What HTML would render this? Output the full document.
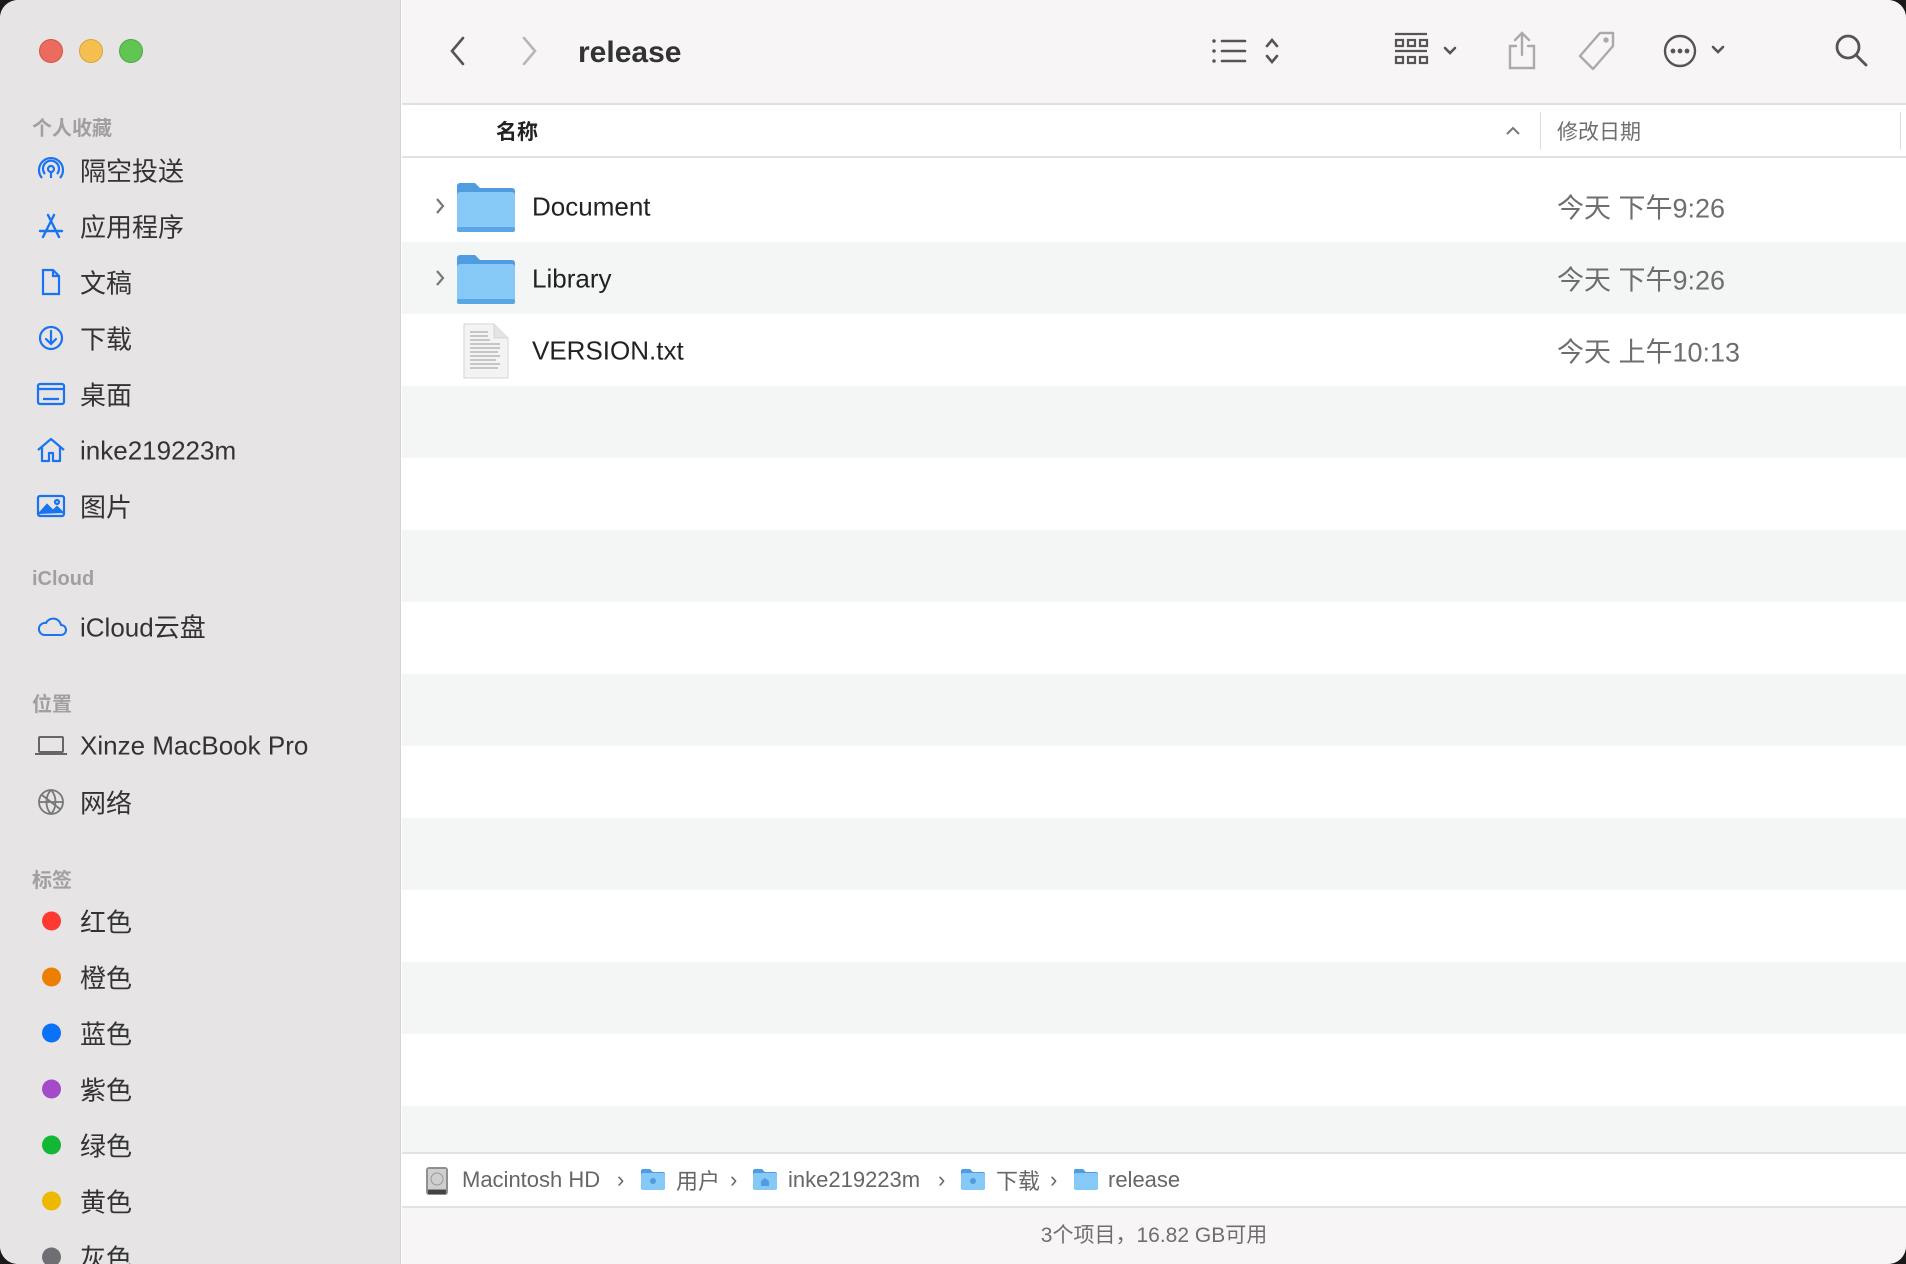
<!DOCTYPE html>
<html><head><meta charset="utf-8"><style>
*{margin:0;padding:0;box-sizing:border-box}
body{width:1906px;height:1264px;background:#1a1a1a;overflow:hidden;font-family:"Liberation Sans","Noto Sans CJK SC",sans-serif;position:relative}
.win{position:absolute;left:0;top:0;width:1906px;height:1264px;border-radius:18px;overflow:hidden;background:#fff}
.side{position:absolute;left:0;top:0;width:401px;height:1264px;background:#e7e4e5;border-right:1px solid #d6d3d4}
.abs{position:absolute}
.tl{position:absolute;top:39px;width:24px;height:24px;border-radius:50%}
.sh{position:absolute;left:32px;font-size:20px;color:#a29fa0;font-weight:bold}
.si{position:absolute;left:80px;font-size:26px;color:#333;transform:translateY(-50%);white-space:nowrap}
.ic{position:absolute;left:36px;transform:translateY(-50%)}
.dot{position:absolute;left:42px;width:19px;height:19px;border-radius:50%;transform:translateY(-50%)}
.tb{position:absolute;left:402px;top:0;right:0;height:105px;background:#f8f5f6;border-bottom:2px solid #e2dfe0}
.hdr{position:absolute;left:402px;top:105px;right:0;height:53px;background:#fff;border-bottom:2px solid #e2e2e2}
.row{position:absolute;left:402px;right:0;height:72px}
.g{background:#f4f5f5}
.nm{position:absolute;left:532px;font-size:26px;color:#222;transform:translateY(-50%)}
.dt{position:absolute;left:1557px;font-size:27px;color:#6e6e6e;transform:translateY(-50%)}
.pb{position:absolute;left:402px;right:0;top:1152px;height:56px;background:#fff;border-top:2px solid #e2e2e2;border-bottom:2px solid #e2e2e2}
.st{position:absolute;left:402px;right:0;top:1208px;height:56px;background:#f8f5f6;text-align:center;font-size:21px;color:#6e6e6e;line-height:56px}
.pt{position:absolute;top:1180px;transform:translateY(-50%);font-size:22px;color:#666}
.fold{position:absolute}
</style></head><body><div class="win">
<div class="side">
<div class="tl" style="left:39px;background:#ec6a5e;border:1px solid #d65248"></div>
<div class="tl" style="left:79px;background:#f4bf4f;border:1px solid #d9a43c"></div>
<div class="tl" style="left:119px;background:#61c554;border:1px solid #4ea842"></div>
<div class="sh" style="top:112px">个人收藏</div>
<svg class="ic" style="top:170px" width="30" height="30" viewBox="0 0 30 30" fill="none" stroke="#1a73f0" stroke-width="2.2"><circle cx="15" cy="14" r="3"/><path d="M9 19a8 8 0 1 1 12 0M6 23a12 12 0 1 1 18 0"/><path d="M15 17v6"/></svg>
<div class="si" style="top:170px">隔空投送</div>
<svg class="ic" style="top:226px" width="30" height="30" viewBox="0 0 30 30" fill="none" stroke="#1a73f0" stroke-width="2.4" stroke-linecap="round"><path d="M12 4l11 22M18 4L7 26M4 20h22"/></svg>
<div class="si" style="top:226px">应用程序</div>
<svg class="ic" style="top:282px" width="30" height="30" viewBox="0 0 30 30" fill="none" stroke="#1a73f0" stroke-width="2.2"><path d="M7 3h10l6 6v18H7zM17 3v6h6"/></svg>
<div class="si" style="top:282px">文稿</div>
<svg class="ic" style="top:338px" width="30" height="30" viewBox="0 0 30 30" fill="none" stroke="#1a73f0" stroke-width="2.2" stroke-linecap="round"><circle cx="15" cy="15" r="11"/><path d="M15 8v13M10 16l5 5 5-5"/></svg>
<div class="si" style="top:338px">下载</div>
<svg class="ic" style="top:394px" width="30" height="30" viewBox="0 0 30 30" fill="none" stroke="#1a73f0" stroke-width="2.2"><rect x="2" y="5" width="26" height="20" rx="2"/><path d="M2 10h26M7 20h16"/></svg>
<div class="si" style="top:394px">桌面</div>
<svg class="ic" style="top:450px" width="30" height="30" viewBox="0 0 30 30" fill="none" stroke="#1a73f0" stroke-width="2.2" stroke-linejoin="round"><path d="M2 15L15 4l13 11M6 12v14h7v-8h4v8h7V12"/></svg>
<div class="si" style="top:451px">inke219223m</div>
<svg class="ic" style="top:506px" width="30" height="30" viewBox="0 0 30 30" fill="none" stroke="#1a73f0" stroke-width="2.2"><rect x="2" y="5" width="26" height="20" rx="2"/><path d="M3 23l8-9 6 6 4-4 6 6" fill="#1a73f0"/><circle cx="21" cy="11" r="2"/></svg>
<div class="si" style="top:506px">图片</div>
<div class="sh" style="top:568px">iCloud</div>
<svg class="ic" style="top:626px" width="32" height="30" viewBox="0 0 32 30" fill="none" stroke="#1a73f0" stroke-width="2"><path d="M8 24h17a5 5 0 0 0 0-10 8 8 0 0 0-15-2 6 6 0 0 0-2 12z"/></svg>
<div class="si" style="top:626px">iCloud云盘</div>
<div class="sh" style="top:688px">位置</div>
<svg class="ic" style="top:746px;left:34px" width="34" height="26" viewBox="0 0 34 26" fill="none" stroke="#666" stroke-width="2"><rect x="5" y="4" width="24" height="15" rx="1"/><path d="M1 21h32"/></svg>
<div class="si" style="top:746px">Xinze MacBook Pro</div>
<svg class="ic" style="top:802px" width="30" height="30" viewBox="0 0 30 30" fill="none" stroke="#777" stroke-width="1.8"><circle cx="15" cy="15" r="12"/><path d="M3 15h24M15 3c-6 6-6 18 0 24M15 3c6 6 6 18 0 24M6 8l18 14"/></svg>
<div class="si" style="top:802px">网络</div>
<div class="sh" style="top:864px">标签</div>
<div class="dot" style="top:921px;background:#fe3a30"></div><div class="si" style="top:921px">红色</div>
<div class="dot" style="top:977px;background:#ed7f00"></div><div class="si" style="top:977px">橙色</div>
<div class="dot" style="top:1033px;background:#0a72f7"></div><div class="si" style="top:1033px">蓝色</div>
<div class="dot" style="top:1089px;background:#a34bc9"></div><div class="si" style="top:1089px">紫色</div>
<div class="dot" style="top:1145px;background:#12b733"></div><div class="si" style="top:1145px">绿色</div>
<div class="dot" style="top:1201px;background:#ecb800"></div><div class="si" style="top:1201px">黄色</div>
<div class="dot" style="top:1257px;background:#6f6e72"></div><div class="si" style="top:1257px">灰色</div>
</div>

<div class="tb"></div>
<svg class="abs" style="left:447px;top:35px" width="22" height="32" viewBox="0 0 22 32" fill="none" stroke="#555" stroke-width="2.6" stroke-linecap="round"><path d="M16 3L5 16l11 13"/></svg>
<svg class="abs" style="left:518px;top:35px" width="22" height="32" viewBox="0 0 22 32" fill="none" stroke="#b8b6b7" stroke-width="2.6" stroke-linecap="round"><path d="M6 3l11 13L6 29"/></svg>
<div class="abs" style="left:578px;top:36px;font-size:30px;font-weight:bold;color:#333">release</div>
<svg class="abs" style="left:1212px;top:36px" width="74" height="32" viewBox="0 0 74 32" fill="none" stroke="#555" stroke-width="2.6" stroke-linecap="round"><path d="M2 5h0M2 15h0M2 25h0" stroke-width="3.5"/><path d="M10 5h23M10 15h23M10 25h23M55 10l5-6 5 6M55 20l5 6 5-6"/></svg>
<svg class="abs" style="left:1393px;top:32px" width="70" height="38" viewBox="0 0 70 38" fill="none" stroke="#555" stroke-width="2.2"><path d="M2 2h32M2 19h32"/><rect x="3" y="8" width="7" height="6"/><rect x="15" y="8" width="7" height="6"/><rect x="27" y="8" width="7" height="6"/><rect x="3" y="25" width="7" height="6"/><rect x="15" y="25" width="7" height="6"/><rect x="27" y="25" width="7" height="6"/><path d="M52 16l5 5 5-5" stroke-width="2.6" stroke-linecap="round"/></svg>
<svg class="abs" style="left:1505px;top:30px" width="34" height="40" viewBox="0 0 34 40" fill="none" stroke="#aaa" stroke-width="2.4" stroke-linecap="round"><path d="M17 3v22M10 10l7-7 7 7M11 16H5v22h24V16h-6"/></svg>
<svg class="abs" style="left:1578px;top:30px" width="40" height="42" viewBox="0 0 40 42" fill="none" stroke="#aaa" stroke-width="2.4" stroke-linejoin="round"><path d="M22 3h13v13L15 39 2 26z"/><circle cx="28" cy="10" r="1.5" fill="#aaa"/></svg>
<svg class="abs" style="left:1660px;top:33px" width="76" height="36" viewBox="0 0 76 36" fill="none" stroke="#555" stroke-width="2.4"><circle cx="20" cy="18" r="15"/><circle cx="13" cy="18" r="1.2" fill="#555"/><circle cx="20" cy="18" r="1.2" fill="#555"/><circle cx="27" cy="18" r="1.2" fill="#555"/><path d="M53 14l5 5 5-5" stroke-width="2.6" stroke-linecap="round"/></svg>
<svg class="abs" style="left:1834px;top:33px" width="36" height="36" viewBox="0 0 36 36" fill="none" stroke="#555" stroke-width="2.8" stroke-linecap="round"><circle cx="14" cy="14" r="11"/><path d="M22 22l10 10"/></svg>

<div class="hdr"></div>
<div class="abs" style="left:496px;top:116px;font-size:21px;font-weight:bold;color:#222">名称</div>
<svg class="abs" style="left:1505px;top:124px" width="16" height="12" viewBox="0 0 16 12" fill="none" stroke="#777" stroke-width="2"><path d="M2 10l6-6 6 6"/></svg>
<div class="abs" style="left:1540px;top:112px;width:1px;height:38px;background:#ddd"></div>
<div class="abs" style="left:1557px;top:116px;font-size:21px;color:#6e6e6e">修改日期</div>
<div class="abs" style="left:1900px;top:112px;width:1px;height:38px;background:#ddd"></div>

<div class="row" style="top:170px"></div>
<div class="row g" style="top:242px"></div>
<div class="row" style="top:314px"></div>
<div class="row g" style="top:386px"></div>
<div class="row" style="top:458px"></div>
<div class="row g" style="top:530px"></div>
<div class="row" style="top:602px"></div>
<div class="row g" style="top:674px"></div>
<div class="row" style="top:746px"></div>
<div class="row g" style="top:818px"></div>
<div class="row" style="top:890px"></div>
<div class="row g" style="top:962px"></div>
<div class="row" style="top:1034px"></div>
<div class="row g" style="top:1106px"></div>

<svg class="abs" style="left:434px;top:196px" width="12" height="20" viewBox="0 0 12 20" fill="none" stroke="#777" stroke-width="2.2"><path d="M3 3l6 7-6 7"/></svg>
<svg class="abs" style="left:434px;top:268px" width="12" height="20" viewBox="0 0 12 20" fill="none" stroke="#777" stroke-width="2.2"><path d="M3 3l6 7-6 7"/></svg>
<svg class="fold" style="left:456px;top:180px" width="60" height="54" viewBox="0 0 60 54"><path d="M1 6a3 3 0 0 1 3-3h15l5 5h32a3 3 0 0 1 3 3v38a3 3 0 0 1-3 3H4a3 3 0 0 1-3-3z" fill="#4f9ce0"/><rect x="1" y="12" width="58" height="40" rx="3" fill="#86c9f7"/><rect x="1" y="47" width="58" height="5" rx="2" fill="#5aa7e4"/></svg>
<svg class="fold" style="left:456px;top:252px" width="60" height="54" viewBox="0 0 60 54"><path d="M1 6a3 3 0 0 1 3-3h15l5 5h32a3 3 0 0 1 3 3v38a3 3 0 0 1-3 3H4a3 3 0 0 1-3-3z" fill="#4f9ce0"/><rect x="1" y="12" width="58" height="40" rx="3" fill="#86c9f7"/><rect x="1" y="47" width="58" height="5" rx="2" fill="#5aa7e4"/></svg>
<svg class="fold" style="left:462px;top:322px" width="48" height="58" viewBox="0 0 48 58"><path d="M2 2h30l14 14v40H2z" fill="#f3f3f3" stroke="#d6d6d6"/><path d="M32 2v14h14" fill="#e3e3e3" stroke="#d6d6d6"/><g stroke="#aaa" stroke-width="1.2"><path d="M8 10h18M8 14h18M8 18h20M8 22h30M8 26h30M8 30h28M8 34h30M8 38h26M8 42h30M8 46h28"/></g></svg>
<div class="nm" style="top:207px">Document</div>
<div class="nm" style="top:279px">Library</div>
<div class="nm" style="top:351px">VERSION.txt</div>
<div class="dt" style="top:206px">今天 下午9:26</div>
<div class="dt" style="top:278px">今天 下午9:26</div>
<div class="dt" style="top:350px">今天 上午10:13</div>

<div class="pb"></div>
<svg class="abs" style="left:425px;top:1166px" width="24" height="30" viewBox="0 0 24 30"><rect x="1" y="1" width="22" height="28" rx="3" fill="#8f8f8f"/><rect x="3" y="3" width="18" height="20" fill="#cfcfcf"/><circle cx="12" cy="13" r="6" fill="none" stroke="#999"/><rect x="3" y="24" width="18" height="4" fill="#444"/></svg>
<div class="pt" style="left:462px">Macintosh HD</div><div class="pt" style="left:617px">›</div>
<svg class="abs" style="left:640px;top:1167px" width="26" height="24" viewBox="0 0 26 24"><path d="M1 4a2 2 0 0 1 2-2h7l3 3h10a2 2 0 0 1 2 2v15H1z" fill="#4f9ce0"/><rect x="1" y="6" width="24" height="17" rx="2" fill="#86c9f7"/><circle cx="13" cy="14" r="3" fill="#4f9ce0"/></svg>
<div class="pt" style="left:676px">用户</div><div class="pt" style="left:730px">›</div>
<svg class="abs" style="left:752px;top:1167px" width="26" height="24" viewBox="0 0 26 24"><path d="M1 4a2 2 0 0 1 2-2h7l3 3h10a2 2 0 0 1 2 2v15H1z" fill="#4f9ce0"/><rect x="1" y="6" width="24" height="17" rx="2" fill="#86c9f7"/><path d="M9 19v-5l4-3 4 3v5z" fill="#4f9ce0"/></svg>
<div class="pt" style="left:788px">inke219223m</div><div class="pt" style="left:938px">›</div>
<svg class="abs" style="left:960px;top:1167px" width="26" height="24" viewBox="0 0 26 24"><path d="M1 4a2 2 0 0 1 2-2h7l3 3h10a2 2 0 0 1 2 2v15H1z" fill="#4f9ce0"/><rect x="1" y="6" width="24" height="17" rx="2" fill="#86c9f7"/><circle cx="13" cy="14" r="3" fill="#4f9ce0"/></svg>
<div class="pt" style="left:996px">下载</div><div class="pt" style="left:1050px">›</div>
<svg class="abs" style="left:1073px;top:1167px" width="26" height="24" viewBox="0 0 26 24"><path d="M1 4a2 2 0 0 1 2-2h7l3 3h10a2 2 0 0 1 2 2v15H1z" fill="#4f9ce0"/><rect x="1" y="6" width="24" height="17" rx="2" fill="#86c9f7"/></svg>
<div class="pt" style="left:1108px">release</div>
<div class="st">3个项目，16.82 GB可用</div>
</div></body></html>
